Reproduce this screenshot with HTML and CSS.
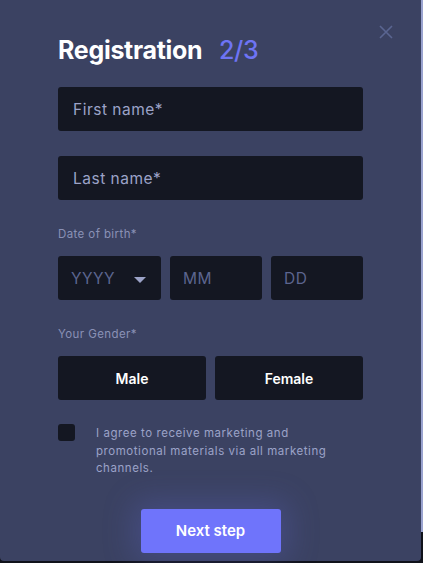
FILE: index.html
```html
<!doctype html>
<html>
<head>
<meta charset="UTF-8" />
<title>Registration</title>
<link rel="stylesheet" href="styles.css">
</head>
<body>
	<div id="modal">
		<a href="#" id="close" aria-label="Close">
			<svg width="14" height="14" viewBox="0 0 14 14"><path d="M1 1L13 13M13 1L1 13" stroke="#5a6591" stroke-width="1.6" fill="none"/></svg>
		</a>
		<form id="form">
			<h1>Registration <span class="step">2/3</span></h1>
			<input type="text" class="field" placeholder="First name*"/>
			<input type="text" class="field" placeholder="Last name*"/>
			<label class="caption">Date of birth*</label>
			<div class="date-row">
				<div class="field year">
					<span>YYYY</span>
					<i class="arrow"></i>
				</div>
				<input type="text" class="field small" placeholder="MM"/>
				<input type="text" class="field small" placeholder="DD"/>
			</div>
			<label class="caption">Your Gender*</label>
			<div class="gender-row">
				<a href="#" class="gender">Male</a>
				<a href="#" class="gender">Female</a>
			</div>
			<label class="agree">
				<span class="box"></span>
				<span class="agree-text">I agree to receive marketing and promotional materials via all marketing channels.</span>
			</label>
			<div class="actions">
				<a href="#" id="next">Next step</a>
			</div>
		</form>
	</div>
	<div id="scroll-thumb"></div>
</body>
</html>
```

FILE: styles.css
```css
html, body, h1, div, form, input, a, label, span{
	margin:0;
	padding:0;
	outline:0;
	box-sizing:border-box;
}
body{
	background-color:#10121a;
	font-family:Inter, "Noto Sans", sans-serif;
	width:423px;
	height:563px;
	overflow:hidden;
}
#modal{
	position:relative;
	width:421px;
	height:561px;
	background-color:#3b4262;
	border-radius:0 0 4px 4px;
	padding:36px 0 0 58px;
}
#close{
	position:absolute;
	top:25px;
	left:379px;
	line-height:0;
}
#scroll-thumb{
	position:absolute;
	top:0;
	left:421px;
	width:2px;
	height:532px;
	background-color:#9aa3cf;
}
#form{
	width:305px;
	display:flex;
	flex-direction:column;
}
h1{
	font-size:25px;
	font-weight:700;
	color:#fff;
	letter-spacing:-0.3px;
	line-height:28px;
	margin-bottom:23px;
}
h1 .step{
	margin-left:11px;
	font-weight:500;
	color:#6e74f5;
}
.field{
	height:44px;
	border:0;
	border-radius:3px;
	background-color:#141722;
	color:#fff;
	font-family:inherit;
	font-size:15.5px;
	letter-spacing:0.5px;
	padding:0 15px;
	margin-bottom:25px;
}
.field::placeholder{
	color:#9ca3c8;
}
.caption{
	font-size:11.5px;
	letter-spacing:0.4px;
	color:#8a91b6;
	margin:2px 0 15px;
}
.date-row{
	display:flex;
	gap:9px;
	margin-bottom:25px;
}
.date-row .field{
	margin-bottom:0;
}
.year{
	width:103px;
	display:flex;
	align-items:center;
	justify-content:space-between;
	padding:0 15px 0 13px;
	color:#5c658f;
	font-size:15.5px;
}
.arrow{
	width:0;
	height:0;
	border-left:6px solid transparent;
	border-right:6px solid transparent;
	border-top:6px solid #9ca3c8;
	margin-top:3px;
}
.small{
	width:92px;
	padding:0 13px;
}
.small::placeholder{
	color:#5c658f;
}
.gender-row{
	display:flex;
	gap:9px;
	margin-bottom:24px;
}
.gender{
	flex:1;
	height:44px;
	display:flex;
	align-items:center;
	justify-content:center;
	background-color:#141722;
	border-radius:3px;
	color:#fff;
	text-decoration:none;
	font-size:14px;
	font-weight:600;
}
.agree{
	display:flex;
	gap:21px;
}
.box{
	flex:none;
	width:17px;
	height:17px;
	border-radius:3px;
	background-color:#141722;
}
.agree-text{
	font-size:11.5px;
	letter-spacing:0.55px;
	line-height:17.5px;
	color:#9ca3c8;
	margin-top:1px;
	width:267px;
}
.actions{
	display:flex;
	justify-content:center;
	margin-top:31px;
}
#next{
	width:140px;
	height:44px;
	display:flex;
	align-items:center;
	justify-content:center;
	background-color:#6f74fb;
	border-radius:3px;
	color:#fff;
	text-decoration:none;
	font-size:15px;
	font-weight:600;
	box-shadow:0 0 30px 8px rgba(100,108,220,0.25);
}
```
